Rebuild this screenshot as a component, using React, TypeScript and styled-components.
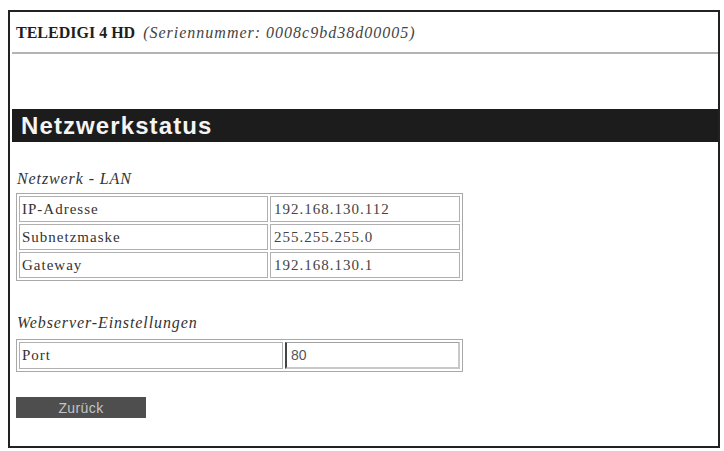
import styled, { createGlobalStyle } from 'styled-components'

type RowType = {
	label: string
	value: string
}

const lanRows: RowType[] = [
	{ label: 'IP-Adresse', value: '192.168.130.112' },
	{ label: 'Subnetzmaske', value: '255.255.255.0' },
	{ label: 'Gateway', value: '192.168.130.1' },
]

const GlobalStyle = createGlobalStyle`
	html, body {
		margin: 0;
		padding: 0;
		background: #fff;
	}

	body {
		font-family: 'Liberation Serif', 'Times New Roman', serif;
		color: #222;
	}
`

const Page = styled.div`
	padding: 10px 0 0 8px;
`

const Frame = styled.div`
	box-sizing: border-box;
	width: 712px;
	height: 438px;
	border: 2px solid #222;
	padding-left: 2px;
`

const Header = styled.div`
	height: 42px;
	box-sizing: border-box;
	padding: 11px 0 0 4px;
	line-height: 20px;
	border-bottom: 2px solid #b4b4b4;
`

const Device = styled.span`
	font-size: 16px;
	font-weight: 700;
	color: #1e1e1e;
`

const Serial = styled.span`
	font-size: 16px;
	font-style: italic;
	letter-spacing: 1px;
	color: #444;
	margin-left: 8px;
`

const TitleBar = styled.h1`
	margin: 55px 0 0;
	height: 33px;
	padding-left: 9px;
	background: #1c1c1c;
	color: #f4f4f4;
	font-family: 'Liberation Sans', Arial, sans-serif;
	font-size: 24px;
	font-weight: 700;
	letter-spacing: 1.1px;
	line-height: 33px;
`

const Content = styled.div`
	padding-left: 4px;
`

const SectionTitle = styled.h2<{ $top: number }>`
	margin: ${p => p.$top}px 0 0 1px;
	font-size: 16px;
	font-weight: 400;
	font-style: italic;
	letter-spacing: 0.9px;
	line-height: 20px;
	color: #333;
`

const Table = styled.table<{ $top: number }>`
	margin-top: ${p => p.$top}px;
	width: 447px;
	border: 1px solid #a8a8a8;
	border-spacing: 2px;
	table-layout: fixed;
`

const LabelCell = styled.td<{ $width: number }>`
	width: ${p => p.$width}px;
	height: 24px;
	padding: 0 2px;
	border: 1px solid #b0b0b0;
	font-size: 15px;
	letter-spacing: 1px;
	color: #333;
	white-space: nowrap;
`

const ValueCell = styled.td`
	height: 24px;
	padding: 0 3px;
	border: 1px solid #b0b0b0;
	font-size: 15px;
	letter-spacing: 1px;
	color: #444;
	white-space: nowrap;
`

const InputCell = styled.td`
	padding: 0;
	border: none;
`

const PortInput = styled.input`
	box-sizing: border-box;
	display: block;
	width: 100%;
	height: 27px;
	margin: 0;
	padding: 0 4px;
	border-style: solid;
	border-width: 1px 2px 2px 2px;
	border-color: #a0a0a0 #c8c8c8 #c8c8c8 #444;
	font-family: 'Liberation Sans', Arial, sans-serif;
	font-size: 14px;
	color: #555;
	background: #fff;
	outline: none;
`

const BackButton = styled.button`
	display: block;
	margin-top: 25px;
	width: 130px;
	height: 21px;
	padding: 0;
	border: none;
	background: #4e4e4e;
	color: #c4c4c4;
	font-family: 'Liberation Sans', Arial, sans-serif;
	font-size: 14px;
	letter-spacing: 0.4px;
	cursor: pointer;
`

function App() {
	return (
		<>
			<GlobalStyle />
			<Page>
				<Frame>
					<Header>
						<Device>TELEDIGI 4 HD</Device>
						<Serial>(Seriennummer: 0008c9bd38d00005)</Serial>
					</Header>

					<TitleBar>Netzwerkstatus</TitleBar>

					<Content>
						<SectionTitle $top={27}>Netzwerk - LAN</SectionTitle>
						<Table $top={4}>
							<tbody>
								{lanRows.map(row => (
									<tr key={row.label}>
										<LabelCell $width={243}>{row.label}</LabelCell>
										<ValueCell>{row.value}</ValueCell>
									</tr>
								))}
							</tbody>
						</Table>

						<SectionTitle $top={32}>Webserver-Einstellungen</SectionTitle>
						<Table $top={6}>
							<tbody>
								<tr>
									<LabelCell $width={258}>Port</LabelCell>
									<InputCell>
										<PortInput defaultValue='80' />
									</InputCell>
								</tr>
							</tbody>
						</Table>

						<BackButton type='button'>Zurück</BackButton>
					</Content>
				</Frame>
			</Page>
		</>
	)
}

export default App
